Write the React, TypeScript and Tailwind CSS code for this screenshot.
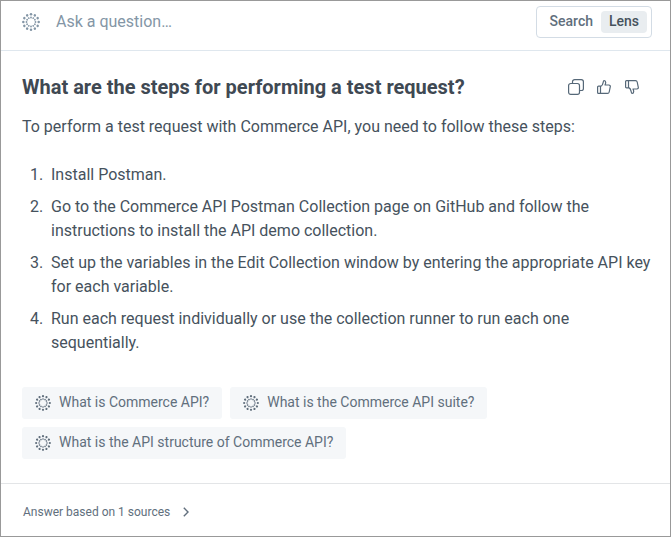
import React from "react";

function LensIcon({ className }: { className: string }) {
  return (
    <svg viewBox="0 0 18 18" className={className} fill="currentColor" aria-hidden="true">
      {Array.from({ length: 12 }, (_, i) => (
        <g key={i} transform={`rotate(${i * 30} 9 9)`}>
          <circle cx="9" cy="1.3" r="1.25" />
          <circle cx="9" cy="4.5" r="0.9" />
        </g>
      ))}
    </svg>
  );
}

function CopyIcon() {
  return (
    <svg viewBox="0 0 16 16" className="size-4" fill="none" stroke="currentColor" strokeWidth="1.2">
      <rect x="0.6" y="4.5" width="10.9" height="10.9" rx="2.1" />
      <path d="M4.5 4.5V2.7A2.1 2.1 0 0 1 6.6.6h6.7a2.1 2.1 0 0 1 2.1 2.1v6.7a2.1 2.1 0 0 1-2.1 2.1h-1.8" />
    </svg>
  );
}

function ThumbIcon({ className = "" }: { className?: string }) {
  return (
    <svg
      viewBox="0 0 14 14"
      className={`size-3.5 ${className}`}
      fill="none"
      stroke="currentColor"
      strokeWidth="1.2"
      strokeLinejoin="round"
    >
      <path d="M3.5 6.2H1.5a.9.9 0 0 0-.9.9v5.4a.9.9 0 0 0 .9.9h2zM3.5 6.6C5.1 5.8 5.9 4.5 6.2 2.3 6.3 1 6.6.6 7.2.6c.9 0 1.5.8 1.5 1.9 0 1-.3 1.7-.7 2.5h3.9c1 0 1.6.8 1.4 1.7l-1.1 5.3c-.2.9-.8 1.4-1.7 1.4h-7" />
    </svg>
  );
}

function Suggestion({ children }: { children: React.ReactNode }) {
  return (
    <button className="flex h-8 items-center rounded-[3px] bg-[#f5f7f9] px-[13px] text-[14px] text-[#616f7d]">
      <LensIcon className="mr-2 size-4" />
      <span className="-mt-px">{children}</span>
    </button>
  );
}

function Step({ number, children }: { number: number; children: React.ReactNode }) {
  return (
    <li className="flex">
      <span className="w-[29px] shrink-0 pl-[8px]">{number}.</span>
      <span className="whitespace-nowrap">{children}</span>
    </li>
  );
}

export default function App() {
  return (
    <div className="flex h-[537px] w-[671px] flex-col border border-[#999999] bg-white font-[Roboto,sans-serif] text-[#46525d]">
      <header className="flex h-[50px] shrink-0 items-start border-b border-[#dfe7ee] pl-[21px] pr-[18px] pt-[5px]">
        <div className="flex h-8 flex-1 items-center text-[16px] text-[#8496a6]">
          <LensIcon className="mr-4 size-[18px]" />
          <span className="-mt-px">Ask a question…</span>
        </div>
        <div className="flex h-8 w-[116px] items-center justify-end rounded-[4px] border border-[#d3dce5] pr-1 text-[14px] font-medium">
          <span className="mr-[8px] -mt-px text-[#616f7d]">Search</span>
          <span className="flex h-[22px] w-[46px] items-center justify-center rounded-[4px] bg-[#e9edf0] pb-px">Lens</span>
        </div>
      </header>

      <main className="flex-1 px-[21px] pt-[22px]">
        <div className="flex h-7 items-center justify-between">
          <h1 className="text-[20px] font-bold leading-7 text-[#3f4953]">
            What are the steps for performing a test request?
          </h1>
          <div className="mr-[10px] flex items-center text-[#566878]">
            <CopyIcon />
            <ThumbIcon className="ml-[13px]" />
            <ThumbIcon className="ml-[14px] -scale-y-100" />
          </div>
        </div>
        <p className="mt-[14px] text-[16px] leading-6">
          To perform a test request with Commerce API, you need to follow these steps:
        </p>
        <ol className="mt-6 space-y-2 text-[16px] leading-6">
          <Step number={1}>Install Postman.</Step>
          <Step number={2}>
            Go to the Commerce API Postman Collection page on GitHub and follow the
            <br />
            instructions to install the API demo collection.
          </Step>
          <Step number={3}>
            Set up the variables in the Edit Collection window by entering the appropriate API key
            <br />
            for each variable.
          </Step>
          <Step number={4}>
            Run each request individually or use the collection runner to run each one
            <br />
            sequentially.
          </Step>
        </ol>
        <div className="mt-8 flex flex-wrap gap-2">
          <Suggestion>What is Commerce API?</Suggestion>
          <Suggestion>What is the Commerce API suite?</Suggestion>
          <Suggestion>What is the API structure of Commerce API?</Suggestion>
        </div>
      </main>

      <footer className="flex h-[53px] shrink-0 items-center border-t border-[#e3e5e7] pl-[22px] pt-[3px] text-[12px] text-[#616f7d]">
        <span>Answer based on 1 sources</span>
        <svg viewBox="0 0 6 10" className="ml-[13px] h-[10px] w-[6px]" fill="none" stroke="currentColor" strokeWidth="1.4">
          <path d="M.8.8 5 5 .8 9.2" />
        </svg>
      </footer>
    </div>
  );
}
